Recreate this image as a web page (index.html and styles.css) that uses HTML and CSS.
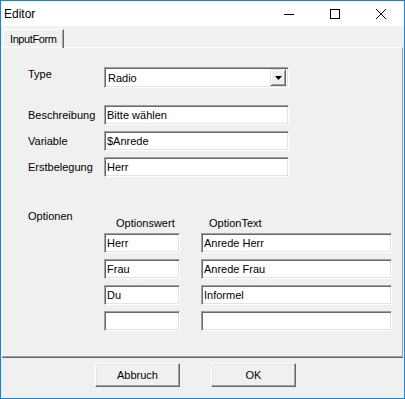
FILE: index.html
```html
<!DOCTYPE html>
<html lang="de">
<head>
    <meta charset="UTF-8">
    <title>Editor</title>
    <link rel="stylesheet" href="styles.css">
</head>
<body>
    <div class="window">
        <div class="titlebar">
            <span class="title">Editor</span>
            <div class="controls">
                <span class="ctl">
                    <svg width="10" height="10" viewBox="0 0 10 10"><path d="M0 5.5H10" stroke="#000" stroke-width="1"/></svg>
                </span>
                <span class="ctl">
                    <svg width="10" height="10" viewBox="0 0 10 10"><rect x="0.5" y="0.5" width="9" height="9" fill="none" stroke="#000" stroke-width="1"/></svg>
                </span>
                <span class="ctl">
                    <svg width="10" height="10" viewBox="0 0 10 10"><path d="M0 0L10 10M10 0L0 10" stroke="#000" stroke-width="1"/></svg>
                </span>
            </div>
        </div>

        <div class="tabstrip">
            <div class="tab">InputForm</div>
        </div>

        <div class="page">
            <div class="row row-type">
                <label class="lbl">Type</label>
                <div class="combo">
                    <span class="combo-text">Radio</span>
                    <span class="combo-btn">
                        <svg width="7" height="4" viewBox="0 0 7 4"><path d="M0 0H7L3.5 4Z" fill="#000"/></svg>
                    </span>
                </div>
            </div>

            <div class="fields">
                <div class="row">
                    <label class="lbl">Beschreibung</label>
                    <input class="field field-wide" type="text" value="Bitte wählen">
                </div>
                <div class="row">
                    <label class="lbl">Variable</label>
                    <input class="field field-wide" type="text" value="$Anrede">
                </div>
                <div class="row">
                    <label class="lbl">Erstbelegung</label>
                    <input class="field field-wide" type="text" value="Herr">
                </div>
            </div>

            <div class="options">
                <label class="lbl">Optionen</label>
                <div class="options-table">
                    <div class="col-head head-wert">Optionswert</div>
                    <div class="col-head head-text">OptionText</div>
                    <input class="field" type="text" value="Herr">
                    <input class="field" type="text" value="Anrede Herr">
                    <input class="field" type="text" value="Frau">
                    <input class="field" type="text" value="Anrede Frau">
                    <input class="field" type="text" value="Du">
                    <input class="field" type="text" value="Informel">
                    <input class="field" type="text" value="">
                    <input class="field" type="text" value="">
                </div>
            </div>
        </div>

        <div class="footer">
            <button class="btn">Abbruch</button>
            <button class="btn">OK</button>
        </div>
    </div>
</body>
</html>
```

FILE: styles.css
```css
body {
    margin: 0;
    font-family: "Liberation Sans", Arial, sans-serif;
    font-size: 11px;
    color: #000;
}

.window {
    width: 405px;
    height: 399px;
    box-sizing: border-box;
    border: 1px solid #1883d7;
    background: #f0f0f0;
    display: flex;
    flex-direction: column;
}

.titlebar {
    height: 25px;
    background: #fff;
    display: flex;
    align-items: center;
    justify-content: space-between;
}

.title {
    font-size: 12px;
    padding-left: 3px;
    margin-top: 1px;
}

.controls {
    display: flex;
    height: 100%;
}

.ctl {
    width: 46px;
    display: flex;
    align-items: center;
    justify-content: center;
}

.tabstrip {
    height: 21px;
    display: flex;
    align-items: flex-end;
}

.tab {
    margin-left: 2px;
    width: 59px;
    height: 19px;
    line-height: 19px;
    padding-left: 6px;
    box-sizing: border-box;
    border-left: 1px solid #fff;
    border-top: 1px solid #fff;
    border-right: 1px solid #696969;
    box-shadow: inset -1px 0 #a0a0a0;
    letter-spacing: -0.4px;
    color: #000;
    position: relative;
    top: 1px;
    width: 61px;
}

.page {
    margin: 0 1px;
    height: 310px;
    box-sizing: border-box;
    border: 1px solid;
    border-color: #fff #a0a0a0 #a0a0a0 #fff;
    box-shadow: 0 1px #696969;
    padding-left: 25px;
}

.row {
    display: flex;
    align-items: center;
}

.lbl {
    width: 76px;
    flex-shrink: 0;
}

.row-type {
    margin-top: 19px;
    align-items: flex-start;
}

.row-type .lbl {
    margin-top: 1px;
}

.combo {
    width: 185px;
    height: 21px;
    box-sizing: border-box;
    background: #fff;
    border: 1px solid;
    border-color: #a0a0a0 #fff #fff #a0a0a0;
    box-shadow: inset 1px 1px #696969, inset -1px -1px #e3e3e3;
    display: flex;
    align-items: center;
    justify-content: space-between;
    padding: 1px 2px 1px 3px;
}

.combo-text {
    padding-top: 1px;
}

.combo-btn {
    width: 16px;
    height: 17px;
    box-sizing: border-box;
    background: #f0f0f0;
    border: 1px solid;
    border-color: #e3e3e3 #696969 #696969 #e3e3e3;
    box-shadow: inset 1px 1px #fff, inset -1px -1px #a0a0a0;
    display: flex;
    align-items: center;
    justify-content: center;
}

.fields {
    margin-top: 17px;
    display: flex;
    flex-direction: column;
    gap: 6px;
}

.field {
    height: 20px;
    box-sizing: border-box;
    margin: 0;
    padding: 0 2px;
    font-family: "Liberation Sans", Arial, sans-serif;
    font-size: 11px;
    color: #000;
    background: #fff;
    border: 1px solid;
    border-color: #a0a0a0 #fff #fff #a0a0a0;
    box-shadow: inset 1px 1px #696969, inset -1px -1px #e3e3e3;
    outline: none;
    width: 100%;
}

.field-wide {
    width: 185px;
}

.options {
    margin-top: 33px;
    display: flex;
    align-items: flex-start;
}

.options-table {
    padding-top: 7px;
    display: grid;
    grid-template-columns: 76px 191px;
    column-gap: 21px;
    row-gap: 6px;
}

.col-head {
    line-height: 13px;
    margin-bottom: -3px;
}

.head-wert {
    padding-left: 12px;
}

.head-text {
    padding-left: 8px;
}

.footer {
    flex: 1;
    display: flex;
    gap: 31px;
    padding: 6px 0 0 94px;
    align-items: flex-start;
}

.btn {
    width: 85px;
    height: 24px;
    box-sizing: border-box;
    font-family: "Liberation Sans", Arial, sans-serif;
    font-size: 11px;
    color: #000;
    background: #f0f0f0;
    border: 1px solid;
    border-color: #fff #696969 #696969 #fff;
    box-shadow: inset -1px -1px #a0a0a0, inset 1px 1px #e3e3e3;
    padding: 0;
}
```
